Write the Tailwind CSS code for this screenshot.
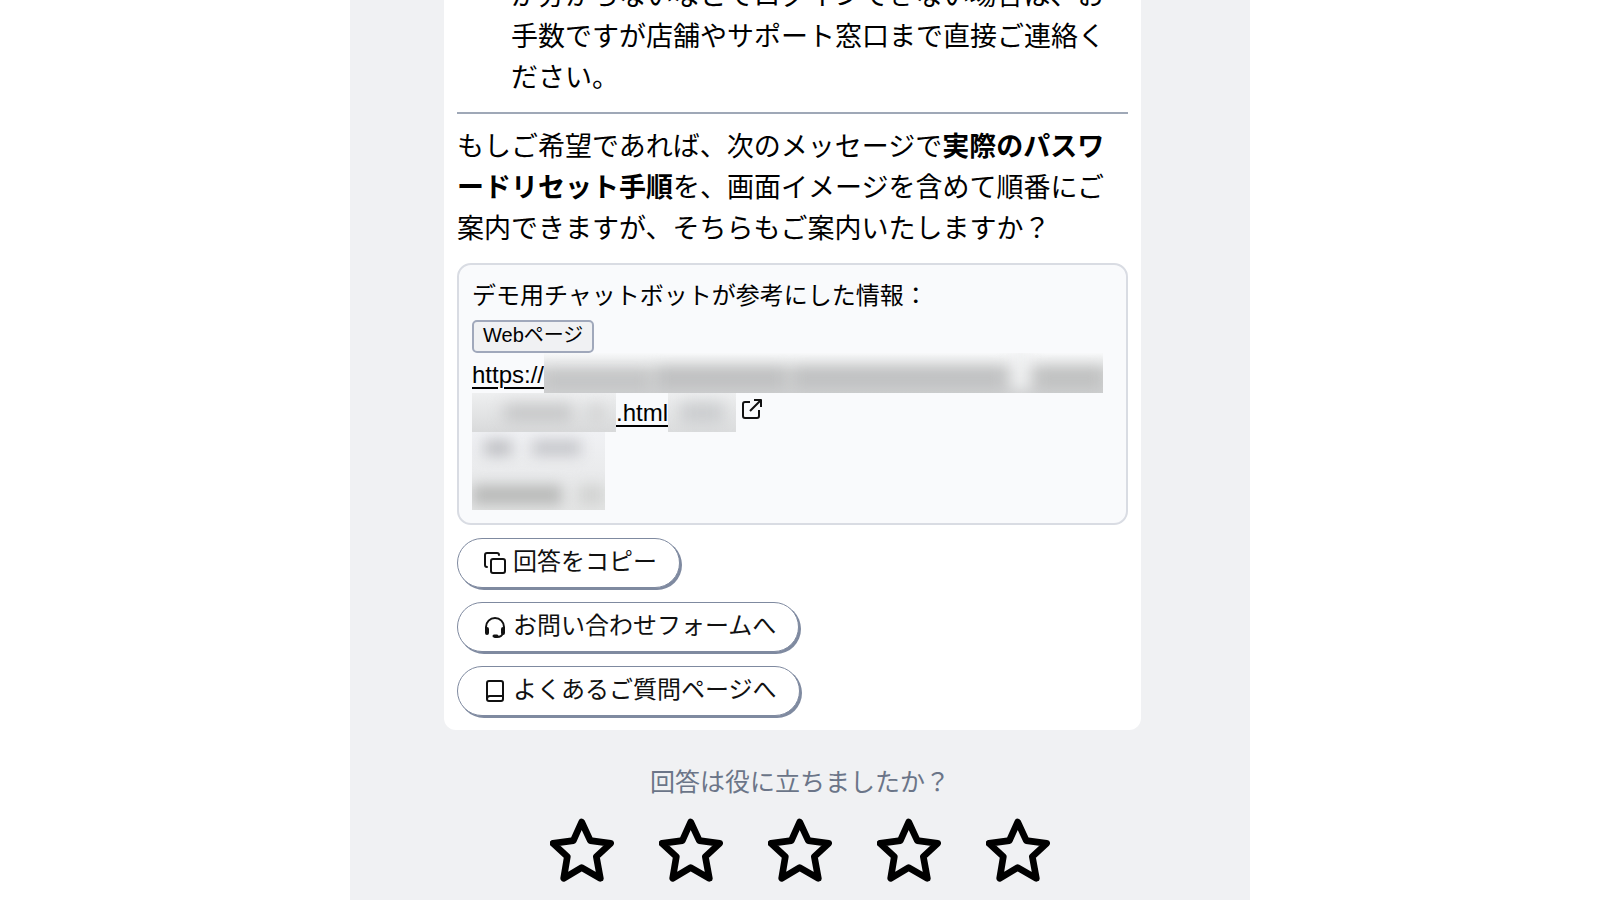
<!DOCTYPE html>
<html lang="ja">
<head>
<meta charset="utf-8">
<meta name="viewport" content="width=device-width, initial-scale=1">
<title>チャットボット</title>
<script src="https://cdn.jsdelivr.net/npm/@tailwindcss/browser@4"></script>
</head>
<body class="bg-white text-black font-['Liberation_Sans','Noto_Sans_CJK_JP',sans-serif]">
<main class="mx-auto flex h-screen max-w-[900px] flex-col justify-end overflow-hidden bg-[#f0f1f3] pb-[18px]">
  <article class="mr-[109px] ml-[94px] flex shrink-0 flex-col gap-[13px] rounded-xl bg-white p-[13px] pb-[14px]">
    <p class="pl-[54px] text-[27px] leading-[41px]">が分からないなどでログインできない場合は、お手数ですが店舗やサポート窓口まで直接ご連絡ください。</p>
    <hr class="border-t-2 border-[#9fa8b7]">
    <p class="text-[27px] leading-[41px]">もしご希望であれば、次のメッセージで<strong class="font-bold">実際のパスワードリセット手順</strong>を、画面イメージを含めて順番にご案内できますが、そちらもご案内いたしますか？</p>

    <section class="rounded-[14px] border-2 border-[#d9dce3] bg-[#f9fafc] p-[13px]">
      <h2 class="mb-[6px] text-2xl leading-[36px]">デモ用チャットボットが参考にした情報：</h2>
      <span class="flex h-[33px] w-fit items-center rounded-[5px] border-2 border-[#a0a8bb] bg-[#f0f1f3] px-[9px] pb-[2px] text-xl leading-[27px]">Webページ</span>
      <a href="#" class="block text-2xl leading-[30px]">
        <span class="flex h-[40px] items-center pr-[10px]">
          <span class="pt-1 underline decoration-2 underline-offset-4">https://</span>
          <span class="h-full flex-1 overflow-hidden bg-linear-to-b from-[#f8f9fa] via-[#d4d5d5] to-[#cfd0d1]">
            <span class="flex h-full items-end justify-between pb-1 blur-[7px]">
              <span class="h-4 w-[19%] bg-[#c2c3c4]"></span>
              <span class="h-5 w-[23%] bg-[#bfc0c1]"></span>
              <span class="h-5 w-[38%] bg-[#c0c1c2]"></span>
              <span class="h-10 w-[3%] bg-[#f0f1f2]"></span>
              <span class="h-5 w-[12%] bg-[#c0c1c1]"></span>
            </span>
          </span>
        </span>
        <span class="flex h-[39px] items-center">
          <span class="h-full w-[144px] overflow-hidden bg-linear-to-b from-[#eeeff0] to-[#d9dadb]">
            <span class="flex h-full items-center gap-4 pr-3 pl-8 blur-[8px]">
              <span class="h-4 flex-1 bg-[#c2c3c4]"></span>
              <span class="h-4 w-4 bg-[#cfd0d0]"></span>
            </span>
          </span>
          <span class="underline decoration-2 underline-offset-4">.html</span>
          <span class="mr-1 h-full w-[68px] overflow-hidden bg-linear-to-b from-[#eeeff0] to-[#dcddde]">
            <span class="flex h-full items-center px-3 blur-[8px]">
              <span class="h-5 flex-1 bg-[#c9cbcd]"></span>
            </span>
          </span>
          <svg class="mb-2 size-6" viewBox="0 0 24 24" fill="none" stroke="#111" stroke-width="2" stroke-linejoin="round" aria-hidden="true"><path d="M19 13v6a2 2 0 0 1-2 2H5a2 2 0 0 1-2-2V7a2 2 0 0 1 2-2h5M14 3h7v7M10 14 21 3"/></svg>
        </span>
      </a>
      <div class="h-[78px] w-[133px] overflow-hidden bg-linear-to-b from-[#f0f1f4] to-[#e4e5e5]">
        <div class="flex h-1/2 items-start gap-5 pt-2 pr-6 pl-3 blur-[7px]">
          <span class="h-4 w-7 bg-[#bfc0c4]"></span>
          <span class="h-4 flex-1 bg-[#c6c7cb]"></span>
        </div>
        <div class="flex h-1/2 items-center gap-4 pt-2 blur-[7px]">
          <span class="h-5 w-[90px] bg-[#b9bab9]"></span>
          <span class="h-5 flex-1 bg-[#d2d3d2]"></span>
        </div>
      </div>
    </section>

    <div class="flex flex-col items-start gap-[14px]">
      <button type="button" class="flex h-[50px] items-center gap-[6px] rounded-full border border-[#7f8aa0] bg-white pr-[22px] pl-[25px] text-2xl leading-[36px] text-[#111] shadow-[2px_2px_0_#7f8aa0]">
        <svg class="size-6" viewBox="0 0 24 24" fill="none" stroke="currentColor" stroke-width="2" stroke-linecap="round" stroke-linejoin="round" aria-hidden="true"><rect x="8" y="8" width="14" height="14" rx="2"/><path d="M4 16a2 2 0 0 1-2-2V4a2 2 0 0 1 2-2h10a2 2 0 0 1 2 2"/></svg>
        <span class="pb-0.5">回答をコピー</span>
      </button>
      <button type="button" class="flex h-[50px] items-center gap-[6px] rounded-full border border-[#7f8aa0] bg-white pr-[22px] pl-[25px] text-2xl leading-[36px] text-[#111] shadow-[2px_2px_0_#7f8aa0]">
        <svg class="size-6" viewBox="0 0 24 24" fill="none" stroke="currentColor" stroke-width="2" aria-hidden="true"><path d="M3 15v-3a9 9 0 0 1 18 0v3"/><path d="M4 14v4M20 14v4" stroke-width="4" stroke-linecap="round"/><path d="M20 18q-1 4-6 4h-2" stroke-linecap="round"/><path d="M11 21h3" stroke-width="3" stroke-linecap="round"/></svg>
        <span class="pb-0.5">お問い合わせフォームへ</span>
      </button>
      <button type="button" class="flex h-[50px] items-center gap-[6px] rounded-full border border-[#7f8aa0] bg-white pr-[22px] pl-[25px] text-2xl leading-[36px] text-[#111] shadow-[2px_2px_0_#7f8aa0]">
        <svg class="size-6" viewBox="0 0 24 24" fill="none" stroke="currentColor" stroke-width="2" stroke-linecap="round" stroke-linejoin="round" aria-hidden="true"><path d="M4 20V4a2 2 0 0 1 2-2h12a2 2 0 0 1 2 2v16a2 2 0 0 1-2 2H6a2 2 0 0 1-2-2q0-3 3-3h13"/></svg>
        <span class="pb-0.5">よくあるご質問ページへ</span>
      </button>
    </div>
  </article>

  <p class="mt-[34px] mb-[18px] shrink-0 text-center text-[25px] leading-[36px] text-[#6b7588]">回答は役に立ちましたか？</p>
  <svg class="hidden" aria-hidden="true"><symbol id="star" viewBox="0 0 192 192"><path d="M95 12 121 68 182 76 139 116 151 181 95 149 41 181 52 116 9 76 70 68Z" fill="none" stroke="#000" stroke-width="20" stroke-linejoin="round"/></symbol></svg>
  <div class="flex shrink-0 justify-center gap-[45px]">
    <button type="button" aria-label="星1"><svg class="size-16"><use href="#star"/></svg></button>
    <button type="button" aria-label="星2"><svg class="size-16"><use href="#star"/></svg></button>
    <button type="button" aria-label="星3"><svg class="size-16"><use href="#star"/></svg></button>
    <button type="button" aria-label="星4"><svg class="size-16"><use href="#star"/></svg></button>
    <button type="button" aria-label="星5"><svg class="size-16"><use href="#star"/></svg></button>
  </div>
</main>
</body>
</html>
